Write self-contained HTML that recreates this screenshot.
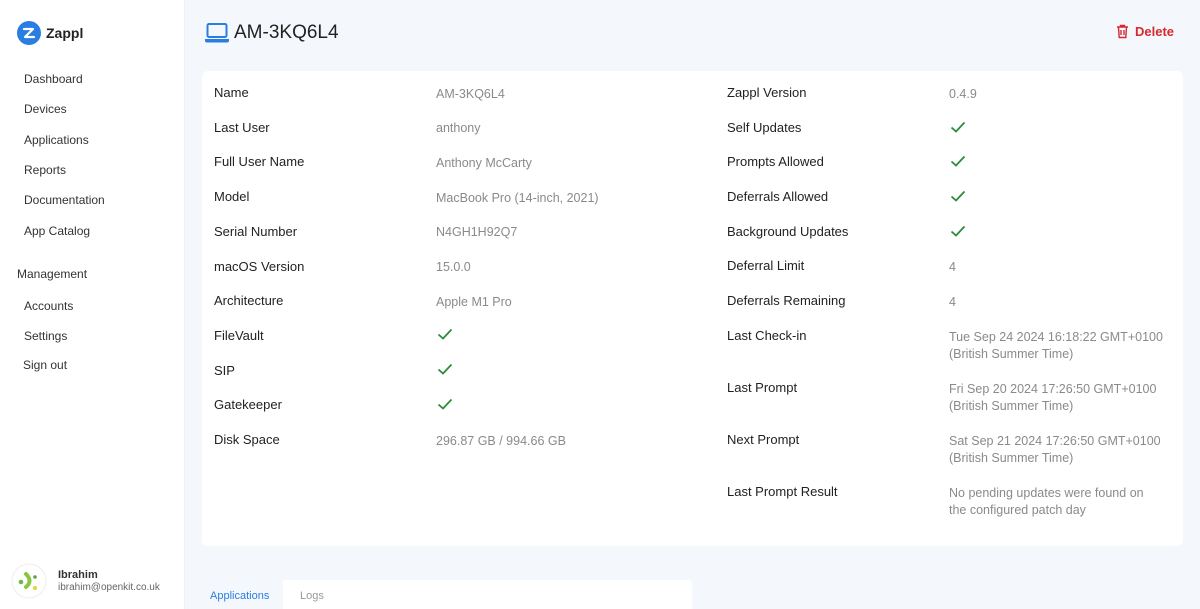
<!DOCTYPE html>
<html><head><meta charset="utf-8"><style>
*{margin:0;padding:0;box-sizing:border-box}
body{width:1200px;height:609px;overflow:hidden;font-family:"Liberation Sans",sans-serif;background:#f4f8fd;position:relative;color:#222}
.side{position:absolute;left:0;top:0;width:185px;height:609px;background:#fff;border-right:1px solid #eef0f3}
.logo{position:absolute;left:17px;top:21px;display:flex;align-items:center;gap:5px;font-weight:bold;font-size:14px}
.nav{position:absolute;left:24px;font-size:12px;color:#333}
.card{position:absolute;left:202px;top:71px;width:981px;height:475px;background:#fff;border-radius:6px}
.r{position:absolute;font-size:13px;line-height:17.5px}
.l{color:#222}.v{color:#8a8a8a;font-size:12.5px;padding-top:1.5px}
.ck{position:absolute}
</style></head><body>
<div class="side">
<div class="logo"><svg width="24" height="24" viewBox="0 0 24 24"><circle cx="12" cy="12" r="12" fill="#2a7de1"/><path d="M7 8h9l-8 8h9" stroke="#fff" stroke-width="2.2" fill="none" stroke-linecap="round" stroke-linejoin="round"/></svg>Zappl</div>
<div class="nav" style="top:72px">Dashboard</div>
<div class="nav" style="top:102px">Devices</div>
<div class="nav" style="top:133px">Applications</div>
<div class="nav" style="top:163px">Reports</div>
<div class="nav" style="top:193px">Documentation</div>
<div class="nav" style="top:224px">App Catalog</div>
<div class="nav" style="top:267px;left:17px">Management</div>
<div class="nav" style="top:299px">Accounts</div>
<div class="nav" style="top:329px">Settings</div>
<div class="nav" style="top:358px;left:23px">Sign out</div>
<svg style="position:absolute;left:11px;top:563px" width="36" height="36" viewBox="0 0 36 36"><circle cx="18" cy="18" r="17" fill="#fff" stroke="#eee"/><circle cx="10" cy="19" r="2.3" fill="#6cb84a"/><path d="M15 11q7 7 0 13" stroke="#8cc63e" stroke-width="4" fill="none" stroke-linecap="round"/><circle cx="24" cy="14" r="1.8" fill="#5aa54a"/><circle cx="24" cy="25" r="2" fill="#e6d33b"/></svg>
<div style="position:absolute;left:58px;top:569px;font-size:11px;font-weight:bold;color:#333">Ibrahim</div>
<div style="position:absolute;left:58px;top:582px;font-size:10px;color:#666">ibrahim@openkit.co.uk</div>
</div>
<svg style="position:absolute;left:204px;top:22px" width="26" height="22" viewBox="0 0 26 22"><rect x="3.5" y="2" width="19" height="13" rx="1.5" fill="none" stroke="#2a7de1" stroke-width="2"/><path d="M1 17h24v1.5a2 2 0 0 1-2 2H3a2 2 0 0 1-2-2z" fill="#2a7de1"/></svg>
<div style="position:absolute;left:234px;top:22px;font-size:19px;color:#222">AM-3KQ6L4</div>
<svg style="position:absolute;left:1116px;top:24px" width="13" height="15" viewBox="0 0 13 15"><path d="M1 3h11M4.5 3V1.5h4V3M2.5 3l.7 10.5h6.6L10.5 3M5 6v5M8 6v5" stroke="#d8282f" stroke-width="1.4" fill="none"/></svg>
<div style="position:absolute;left:1135px;top:24px;font-size:13px;color:#d8282f;font-weight:bold">Delete</div>
<div class="card"></div>
<div id="rows"></div>
<div style="position:absolute;left:202px;top:580px;width:490px;height:29px;background:#fff;border-radius:4px 4px 0 0"></div>
<div style="position:absolute;left:202px;top:580px;width:81px;height:29px;background:#f4f8fd"></div>
<div style="position:absolute;left:210px;top:590px;font-size:11px;color:#2a7de1">Applications</div>
<div style="position:absolute;left:300px;top:590px;font-size:11px;color:#999">Logs</div>
<script>
const C='<svg class="ck" width="16" height="12" viewBox="0 0 16 12"><path d="M1.5 6.5l4.5 4L14.5 1.5" stroke="#2e8b3a" stroke-width="1.8" fill="none"/></svg>';
const L=[["Name","AM-3KQ6L4"],["Last User","anthony"],["Full User Name","Anthony McCarty"],["Model","MacBook Pro (14-inch, 2021)"],["Serial Number","N4GH1H92Q7"],["macOS Version","15.0.0"],["Architecture","Apple M1 Pro"],["FileVault",1],["SIP",1],["Gatekeeper",1],["Disk Space","296.87 GB / 994.66 GB"]];
const R=[["Zappl Version","0.4.9",84],["Self Updates",1,119],["Prompts Allowed",1,153],["Deferrals Allowed",1,188],["Background Updates",1,223],["Deferral Limit","4",257],["Deferrals Remaining","4",292],["Last Check-in","Tue Sep 24 2024 16:18:22 GMT+0100<br>(British Summer Time)",327],["Last Prompt","Fri Sep 20 2024 17:26:50 GMT+0100<br>(British Summer Time)",379],["Next Prompt","Sat Sep 21 2024 17:26:50 GMT+0100<br>(British Summer Time)",431],["Last Prompt Result","No pending updates were found on<br>the configured patch day",483]];
let h='';
L.forEach((r,i)=>{const y=84+i*34.7;h+=`<div class="r l" style="left:214px;top:${y}px">${r[0]}</div>`;h+=r[1]===1?C.replace('class="ck"',`class="ck" style="left:437px;top:${y+1.5}px"`):`<div class="r v" style="left:436px;top:${y}px">${r[1]}</div>`});
R.forEach(r=>{const y=r[2];h+=`<div class="r l" style="left:727px;top:${y}px">${r[0]}</div>`;h+=r[1]===1?C.replace('class="ck"',`class="ck" style="left:950px;top:${y+1.5}px"`):`<div class="r v" style="left:949px;top:${y}px">${r[1]}</div>`});
document.getElementById('rows').innerHTML=h;
</script>
</body></html>
